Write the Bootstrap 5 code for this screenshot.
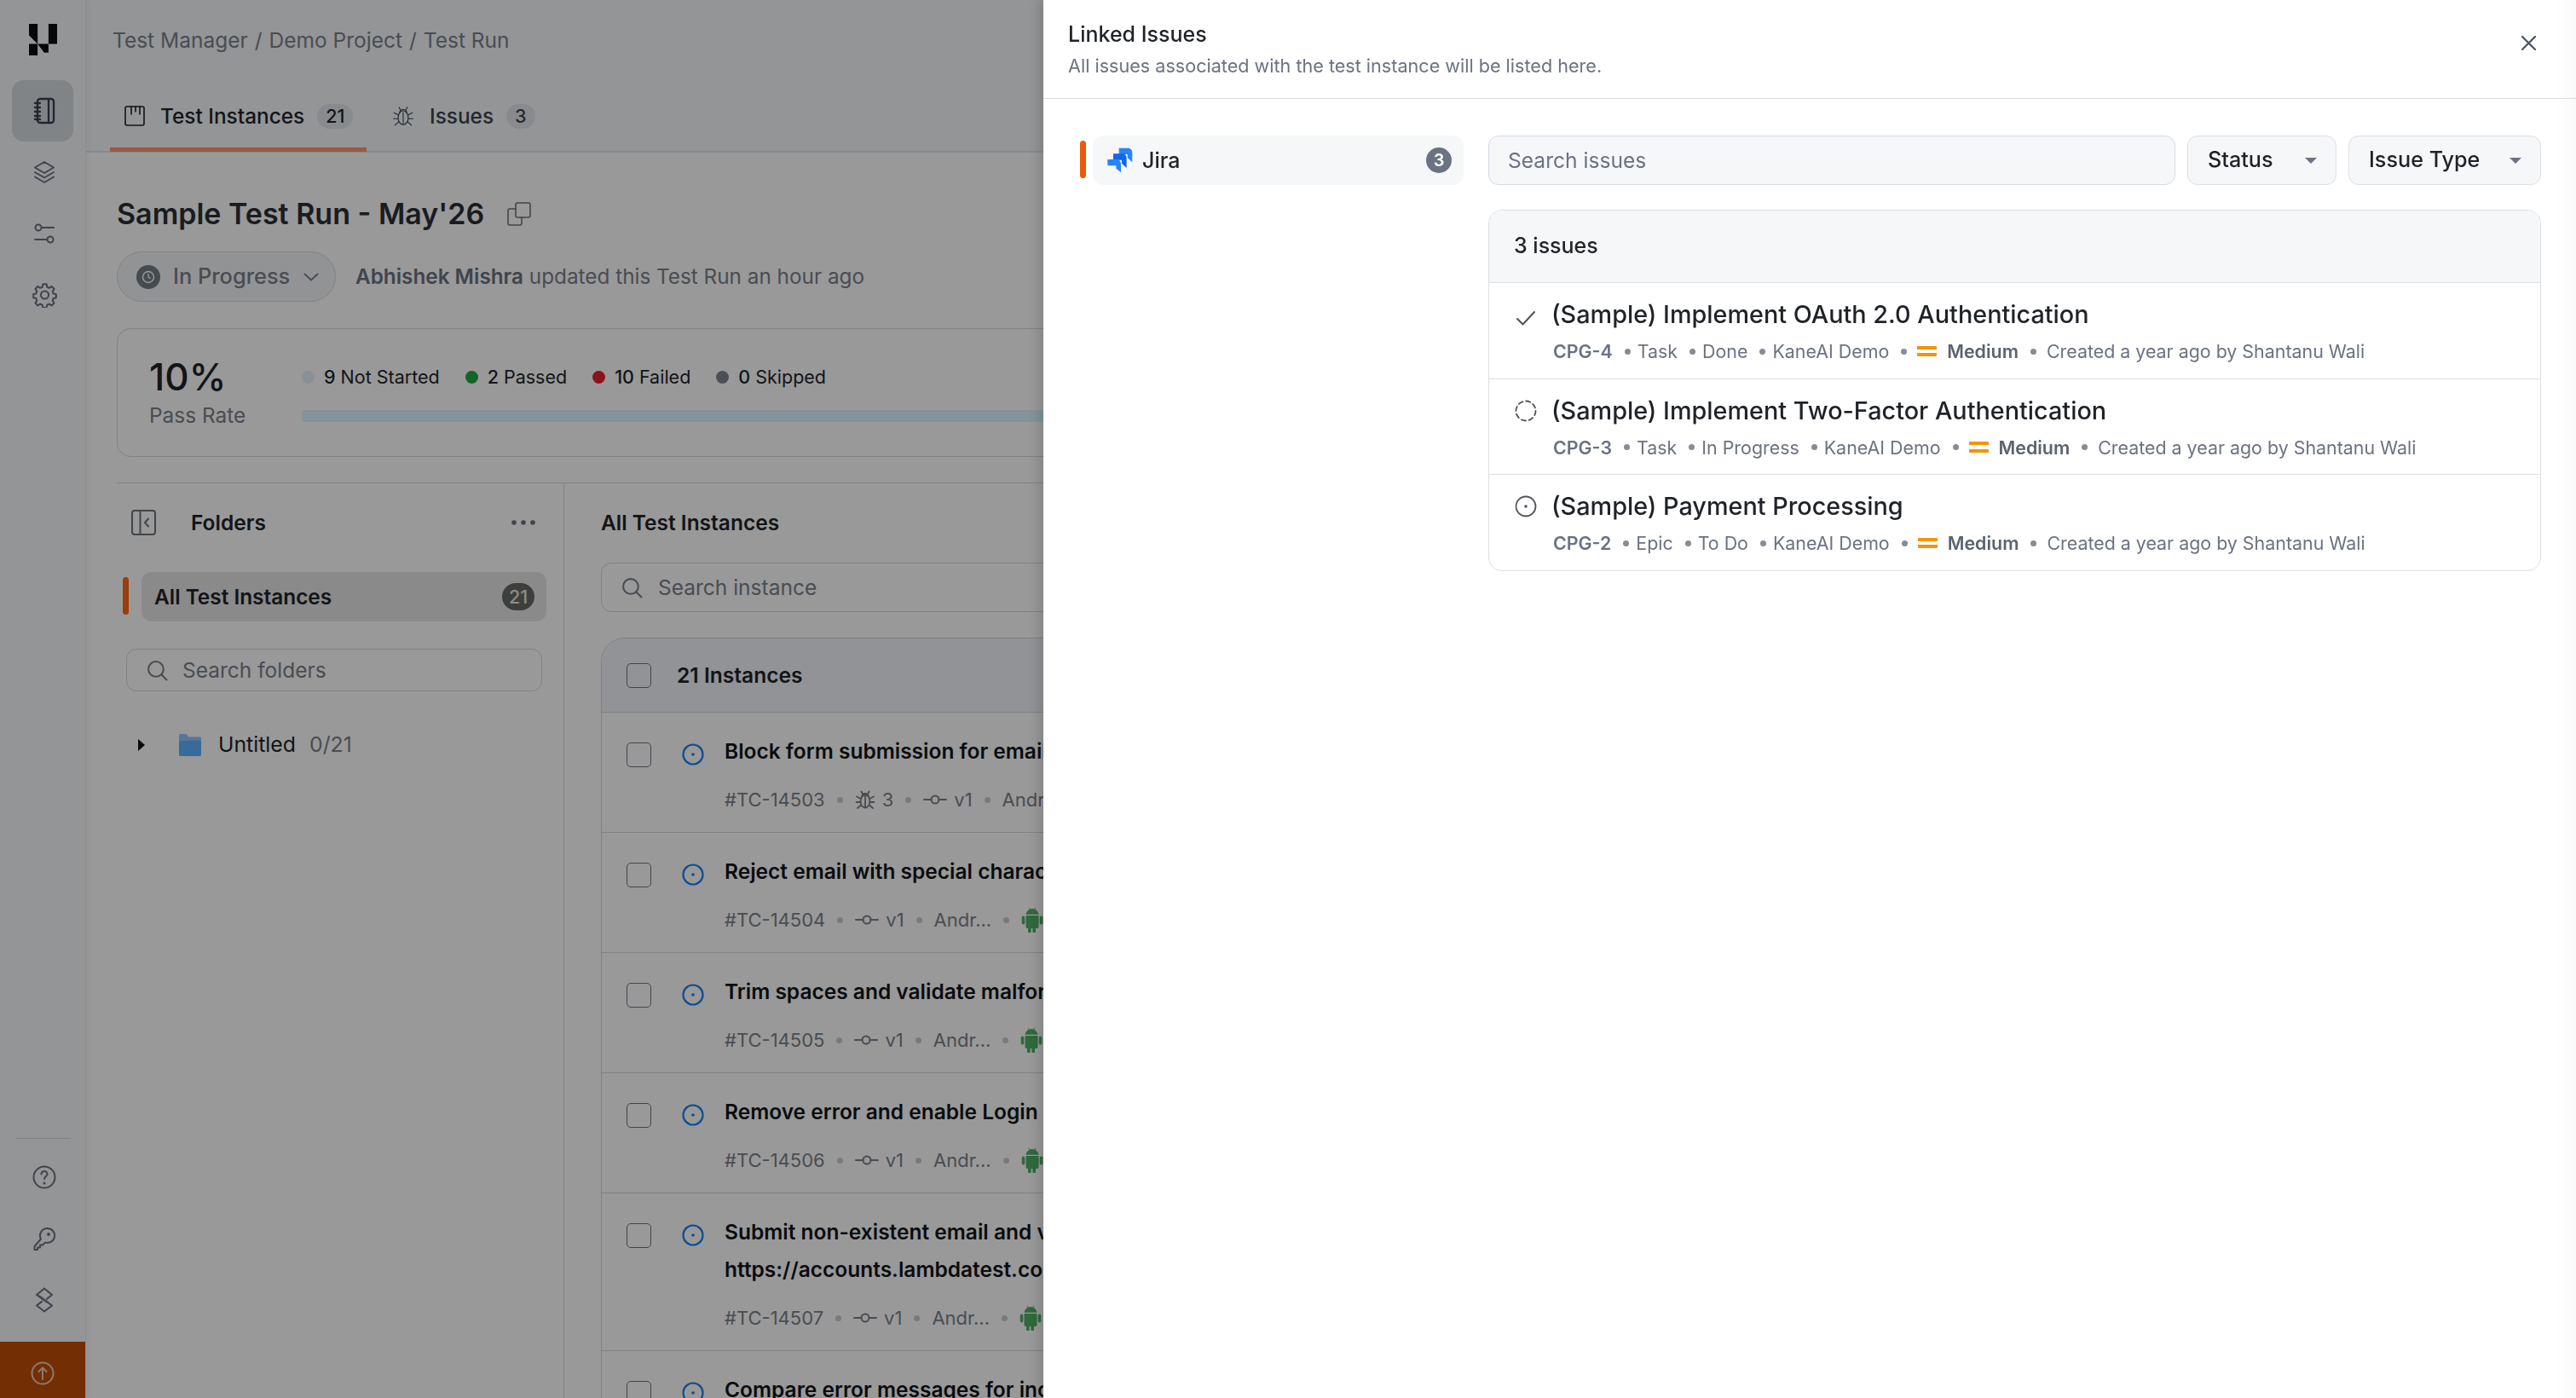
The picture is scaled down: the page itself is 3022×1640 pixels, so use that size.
<!DOCTYPE html>
<html lang="en">
<head>
    <meta charset="UTF-8">
    <meta name="viewport" content="width=device-width, initial-scale=1.0">
    <title>Linked Issues</title>
    <link href="https://cdn.jsdelivr.net/npm/bootstrap@5.3.0/dist/css/bootstrap.min.css" rel="stylesheet">
    <style>
        body { font-family: Inter, "Liberation Sans", sans-serif; color: #1f2328; overflow: hidden; height: 100vh; font-size: 24.5px; }
        .ico { fill: none; stroke: currentColor; stroke-linecap: round; stroke-linejoin: round; flex-shrink: 0; }

        .side-rail { width: 101px; background: #f6f8fa; border-right: 1px solid #eceef0; box-shadow: 3px 0 6px rgba(0,0,0,.03); color: #6b7280; z-index: 1; }
        .rail-logo { height: 94px; }
        .rail-item { width: 72px; height: 72px; border-radius: 14px; }
        .rail-item svg { margin-left: 4px; }
        .rail-item.is-active { background: #d8dce1; color: #374151; }
        .rail-sep { width: 65px; height: 1px; background: #d5d7da; margin-bottom: 9px; }
        .rail-up { height: 66px; background: #c14d05; color: #e8ccb8; margin-top: 13px; }

        .top-head { height: 179px; background: #f6f8fb; border-bottom: 2px solid #e5e7eb; padding-left: 28px; }
        .crumbs { padding: 29px 0 0 3px; height: 110px; color: #7a808a; font-size: 24.5px; line-height: 36px; }
        .tab-on { width: 301px; height: 70px; padding: 0 0 9px 17px; border-bottom: 5px solid #ff9470; margin-bottom: -2px; color: #1f2328; }
        .tab-off { height: 70px; padding: 0 0 14px 30px; color: #374151; }
        .tab-label { font-size: 24.4px; font-weight: 500; margin: 0 15px 0 18px; }
        .tab-count { height: 29px; border-radius: 15px; background: #e5e7eb; font-size: 21.5px; font-weight: 500; padding: 0 10px; line-height: 29px; }

        .sum-wrap { padding: 0 0 0 36px; }
        .run-title { margin-top: 50px; height: 44px; }
        .run-title h1 { font-size: 34px; line-height: 44px; font-weight: 600; margin: 0 26px 0 0; color: #2b2f36; }
        .run-meta { margin-top: 22px; height: 59px; color: #7a808a; font-size: 24.3px; }
        .status-pill { width: 257px; height: 59px; border: 1px solid #d5d9de; border-radius: 30px; background: #f3f5f7; padding-left: 22px; margin-right: 23px; font-size: 25.4px; font-weight: 500; }
        .status-dot { width: 28px; height: 28px; background: #747d86; color: #fff; border-radius: 50%; margin-right: 15px; }
        .run-meta b { font-weight: 600; color: #6b7280; }
        .rate-card { margin-top: 31px; height: 151px; width: 2700px; border: 1px solid #d5d7da; border-radius: 16px; padding: 29px 0 0 37px; }
        .rate-num { font-size: 44px; line-height: 54px; font-weight: 500; color: #1f2328; }
        .rate-lbl { font-size: 24.4px; line-height: 36px; color: #7a808a; }
        .rate-left { width: 175px; }
        .rate-right { padding-top: 12px; }
        .legend { font-size: 21.5px; line-height: 30px; height: 30px; }
        .legend span.pip { width: 15px; height: 15px; border-radius: 50%; margin-right: 11px; }
        .legend b { font-weight: 500; margin-right: 6px; }
        .legend-cell { margin-right: 30px; }
        .rate-bar { height: 14px; border-radius: 4px; margin-top: 24px; background: #d9f6ff; width: 2400px; }

        .split { margin-top: 30px; margin-left: 36px; border-top: 1px solid #d5d7da; }
        .folder-col { width: 525px; border-right: 1px solid #d5d7da; height: 1100px; }
        .pane-head { height: 92px; padding-left: 17px; font-size: 24.5px; font-weight: 600; }
        .pane-head .name { margin-left: 41px; }
        .all-row { margin-top: 12px; margin-left: 7px; gap: 15px; }
        .mark-bar { width: 7px; height: 44px; margin-top: 6px; border-radius: 4px; background: #ff6a14; flex-shrink: 0; }
        .panel-mark { background: #ea580c; }
        .all-pill { width: 475px; height: 58px; border-radius: 12px; background: #e6e6e6; padding: 0 14px 0 15px; font-weight: 600; font-size: 24.4px; }
        .round-count { min-width: 38px; height: 32px; border-radius: 16px; background: #676a67; color: #e8e8e8; font-size: 21.5px; font-weight: 500; text-align: center; line-height: 32px; }
        .find-box { border: 1px solid #d5d7da; border-radius: 12px; color: #7a808a; font-size: 24.5px; }
        .find-folder { margin: 32px 0 0 11px; width: 488px; height: 50px; padding-left: 23px; gap: 17px; }
        .tree-item { margin-top: 40px; height: 46px; padding-left: 25px; font-size: 24.8px; }
        .tree-gap { margin-left: 40px; }
        .tree-count { color: #7a808a; margin-left: 16px; }
        .inst-col { padding-left: 43px; }
        .inst-head { height: 92px; font-size: 24.5px; font-weight: 600; }
        .find-inst { margin-top: 1px; height: 58px; width: 2200px; padding-left: 23px; gap: 18px; }
        .inst-card { margin-top: 30px; width: 2200px; border: 1px solid #d5d7da; border-radius: 28px 0 0 0; }
        .inst-top { height: 86px; background: #f2f5fa; padding-left: 29px; font-weight: 600; font-size: 24.6px; border-radius: 28px 0 0 0; }
        .form-check-input.tick { width: 29px; height: 29px; margin: 0; border-radius: 5px; border: 1.5px solid #6b7280; flex-shrink: 0; background-color: transparent; }
        .inst-top .tick { margin-right: 30px; }
        .inst-row { border-top: 1px solid #d5d7da; padding: 23px 0 18px 29px; min-height: 141px; white-space: nowrap; }
        .inst-row .tick { margin: 12px 36px 0 0; }
        .inst-row .state { margin: 13px 24px 0 0; color: #1480f5; }
        .inst-name { font-size: 24.5px; line-height: 44px; font-weight: 600; color: #111418; }
        .inst-sub { margin-top: 15px; font-size: 22px; line-height: 40px; height: 40px; color: #7a808a; gap: 8px; }
        .inst-sub i { width: 7px; height: 7px; background: #c9ccd1; border-radius: 50%; margin: 0 6px; }
        .inst-sub .droid { color: #50af64; }

        .page-dim { position: fixed; inset: 0; background: rgba(0,0,0,.4); z-index: 1040; }
        .offcanvas.issues-panel { --bs-offcanvas-width: 1798px; border-left: 0; box-shadow: -5px 0 14px rgba(0,0,0,.16), inset -34px 0 30px -34px rgba(0,0,0,.05); transition: none; }
        .panel-top { height: 116px; border-bottom: 1.5px solid #d9dce1; padding: 0 47px 0 29px; }
        .panel-top h5 { font-size: 25px; line-height: 34px; font-weight: 500; margin: 23px 0 0; color: #1f2328; }
        .panel-top p { font-size: 21.6px; line-height: 32px; margin: 4px 0 0; color: #6b7280; }
        .panel-x { color: #4b5563; margin-top: 42px; width: 17px; height: 17px; }
        .panel-body { padding: 43px 41px 0 43px; }
        .src-col { width: 450px; margin-right: 29px; gap: 8px; }
        .src-pill { height: 58px; width: 435px; background: #f6f7f9; border-radius: 12px; padding: 0 14px 0 17px; font-size: 25px; font-weight: 500; }
        .src-name { padding-top: 2px; margin-left: 3px; }
        .src-pill .round-num { width: 30px; height: 30px; border-radius: 50%; background: #6b7280; color: #fff; font-size: 20px; font-weight: 600; line-height: 30px; text-align: center; }
        .issue-col { width: 1235px; }
        .filter-row { gap: 14px; height: 58px; }
        .filter-input { height: 58px; background: #f6f7f9; border: 1.5px solid #d5dae2; border-radius: 12px; padding: 0 22px; color: #6b7280; font-size: 24.6px; }
        .filter-btn { height: 58px; background: #f6f7f9; border: 1.5px solid #dcdfe3; border-radius: 12px; padding: 0 22px 0 23px; font-size: 25.2px; font-weight: 500; color: #1f2328; }
        .caret-mark { width: 0; height: 0; border-left: 7px solid transparent; border-right: 7px solid transparent; border-top: 7px solid #6b7280; }
        .issue-card { margin-top: 29px; border: 1.5px solid #dcdfe3; border-radius: 16px; overflow: hidden; }
        .issue-top { height: 84px; background: #f6f7f9; padding-left: 29px; font-size: 25px; font-weight: 500; }
        .issue-row { border-top: 1.5px solid #dcdfe3; height: 112.5px; padding: 17px 0 0 30px; }
        .issue-row .state { color: #52525b; margin-right: 17px; width: 26px; height: 26px; margin-top: 7px; flex-shrink: 0; }
        .issue-name { font-size: 28.8px; line-height: 40px; font-weight: 500; color: #1f2328; }
        .issue-sub { margin: 8px 0 0 2px; font-size: 21.4px; line-height: 30px; color: #6b7280; }
        .issue-sub b { font-weight: 600; }
        .issue-sub i { width: 7px; height: 7px; background: #858c96; border-radius: 50%; margin: 0 8px 0 14px; }
        .prio { color: #5b6370; }
        .prio-mark { width: 23px; height: 12.5px; border-top: 4px solid #f59307; border-bottom: 4px solid #f59307; border-radius: 1px; }
    </style>
</head>

<body>
    <svg width="0" height="0" class="d-none">
        <symbol id="i-search" viewBox="0 0 24 24"><circle cx="10.500" cy="10.500" r="8.500"/><path d="M17 17l5.500 5.500"/></symbol>
        <symbol id="i-bug" viewBox="0 0 24 24"><ellipse cx="12" cy="14" rx="5.500" ry="7.500"/><path d="M8 8.500c.6-2.400 2-3.500 4-3.500s3.400 1.100 4 3.500M12 8v13M9 5.500L7.500 2.500M15 5.500l1.500-3M7 11L2 8.500M17 11l5-2.500M6.500 15H1.500M17.500 15h5M7 18.500L3 22M17 18.500l4 3.500"/></symbol>
        <symbol id="i-ver" viewBox="0 0 28 14"><circle cx="14" cy="7" r="4.500"/><path d="M1 7h8.500M18.500 7H27"/></symbol>
        <symbol id="i-target" viewBox="0 0 26 26"><circle cx="13" cy="13" r="11.500"/><circle cx="13" cy="13" r="1.800" fill="currentColor" stroke="none"/></symbol>
        <symbol id="i-droid" viewBox="0 0 26 30"><path fill="currentColor" stroke="none" d="M5.500 10h15v13a2 2 0 0 1-2 2h-1.500v3.500a1.800 1.800 0 0 1-3.600 0V25h-1.800v3.500a1.800 1.800 0 0 1-3.600 0V25H7.500a2 2 0 0 1-2-2zM2.500 10.500a1.800 1.800 0 0 1 1.800 1.800v6.500a1.800 1.800 0 0 1-3.600 0v-6.500a1.800 1.800 0 0 1 1.800-1.800zM23.500 10.500a1.800 1.800 0 0 1 1.800 1.800v6.500a1.800 1.800 0 0 1-3.600 0v-6.500a1.800 1.800 0 0 1 1.800-1.800zM5.500 8.800C5.800 5.500 8 3.500 9.600 2.900L8.500 1l.6-.4 1.200 2a8 8 0 0 1 5.400 0l1.200-2 .6.4-1.100 1.900c1.600.6 3.800 2.600 4.100 5.900z"/></symbol>
    </svg>

    <div class="d-flex vh-100">
        <aside class="side-rail d-flex flex-column align-items-center flex-shrink-0">
            <div class="rail-logo d-flex justify-content-center pt-4 w-100">
                <svg width="33" height="37" viewBox="32 25 98 110" class="mt-1"><path fill="#0c0c0c" d="M32 25h30v70L32 65zM32 95h30v40H32zM62 95h38v30H85zM100 25h30v70h-30z"/></svg>
            </div>
            <div class="rail-item is-active d-flex align-items-center justify-content-center">
                <svg class="ico" width="26" height="32" viewBox="0 0 26 32" stroke-width="2.300"><rect x="5" y="2" width="19" height="28" rx="3"/><path d="M18 2v28M2 7h6M2 12h6M2 17h6M2 22h6M2 26h6"/></svg>
            </div>
            <div class="rail-item d-flex align-items-center justify-content-center">
                <svg class="ico" width="26" height="28" viewBox="0 0 26 28" stroke-width="2"><path d="M13 2l11 6.500-11 6.500L2 8.500zM2 14l11 6.500L24 14M2 19.500L13 26l11-6.500"/></svg>
            </div>
            <div class="rail-item d-flex align-items-center justify-content-center">
                <svg class="ico" width="24" height="24" viewBox="0 0 24 24" stroke-width="2"><circle cx="5" cy="5" r="3.500"/><path d="M9 5h14M1 19h14"/><circle cx="19" cy="19" r="3.500"/></svg>
            </div>
            <div class="rail-item d-flex align-items-center justify-content-center">
                <svg class="ico" width="29" height="30" viewBox="0 0 24 24" stroke-width="1.700"><path d="M10.300 2.500h3.400l.6 2.800 2 .9 2.500-1.500 2.300 2.500-1.500 2.400.8 2 2.600.7v3.400l-2.600.7-.8 2 1.500 2.400-2.300 2.500-2.500-1.500-2 .9-.6 2.800h-3.400l-.6-2.800-2-.9-2.500 1.500-2.300-2.500 1.500-2.400-.8-2-2.600-.7v-3.400l2.600-.7.8-2-1.500-2.400L5.200 4.700l2.500 1.500 2-.9z" transform="translate(0 -1)"/><circle cx="12" cy="12" r="3.800"/></svg>
            </div>

            <div class="rail-sep mt-auto"></div>
            <div class="rail-item d-flex align-items-center justify-content-center">
                <svg class="ico" width="28" height="28" viewBox="0 0 28 28" stroke-width="2"><circle cx="14" cy="14" r="12.500"/><path d="M10.500 10.500c0-2 1.500-3.500 3.500-3.500s3.500 1.500 3.500 3.300c0 2.700-3.500 2.700-3.500 5.700"/><circle cx="14" cy="21" r="1.500" fill="currentColor" stroke="none"/></svg>
            </div>
            <div class="rail-item d-flex align-items-center justify-content-center">
                <svg class="ico" width="26" height="28" viewBox="0 0 26 28" stroke-width="2"><path d="M16.500 2a8.500 8.500 0 1 1-2.500 16.600L11 21.500H8v3H5V27H1.500v-4L9 14.500A8.500 8.500 0 0 1 16.500 2z"/><circle cx="18" cy="9" r=".9" fill="currentColor"/></svg>
            </div>
            <div class="rail-item d-flex align-items-center justify-content-center">
                <svg class="ico" width="22" height="30" viewBox="0 0 22 30" stroke-width="2.100"><path d="M11 1.500L20 9l-6 4.800M8 12.500L2 9l9-7.500M11 15l9 6.500-9 7-9-7 6-4.600M14 17.500L2 9M8 12.500L20 21.500"/></svg>
            </div>
            <div class="rail-up w-100 d-flex align-items-center justify-content-center">
                <svg class="ico mt-2" width="28" height="30" viewBox="0 0 28 30" stroke-width="2"><circle cx="14" cy="15" r="12.500"/><path d="M14 22V9M9.500 13L14 8.500l4.500 4.500"/></svg>
            </div>
        </aside>

        <main class="flex-grow-1 overflow-hidden">
            <header class="top-head">
                <div class="crumbs d-flex gap-2"><span>Test Manager</span><span>/</span><span>Demo Project</span><span>/</span><span>Test Run</span></div>
                <nav class="d-flex" style="margin-top:-2px">
                    <div class="tab-on d-flex align-items-center">
                        <svg class="ico" width="24" height="24" viewBox="0 0 24 24" stroke-width="1.600"><rect x="1" y="1" width="22" height="22" rx="2"/><path d="M8 1v9M13 1v6M18 1v9"/></svg>
                        <span class="tab-label">Test Instances</span><span class="tab-count">21</span>
                    </div>
                    <div class="tab-off d-flex align-items-center">
                        <svg class="ico" width="26" height="26"><use href="#i-bug"/></svg>
                        <span class="tab-label">Issues</span><span class="tab-count">3</span>
                    </div>
                </nav>
            </header>

            <section class="sum-wrap">
                <div class="run-title d-flex align-items-center">
                    <h1>Sample Test Run - May'26</h1>
                    <svg class="ico text-secondary" width="30" height="30" viewBox="0 0 30 30" stroke-width="1.600"><rect x="11" y="2" width="17" height="17" rx="2"/><path d="M11 9H4a2 2 0 0 0-2 2v15a2 2 0 0 0 2 2h12a2 2 0 0 0 2-2v-7"/></svg>
                </div>
                <div class="run-meta d-flex align-items-center">
                    <div class="status-pill d-flex align-items-center">
                        <span class="status-dot d-flex align-items-center justify-content-center">
                            <svg class="ico" width="16" height="16" viewBox="0 0 16 16" stroke-width="1.400"><circle cx="8" cy="8" r="6.500"/><path d="M8 4.500V8l2 1.500"/></svg>
                        </span>
                        <span>In Progress</span>
                        <svg class="ico ms-3" width="18" height="10" viewBox="0 0 18 10" stroke-width="2"><path d="M1.500 1.500L9 8.500l7.500-7"/></svg>
                    </div>
                    <span><b>Abhishek Mishra</b> updated this Test Run an hour ago</span>
                </div>
                <div class="rate-card d-flex align-items-start">
                    <div class="rate-left">
                        <div class="rate-num">10%</div>
                        <div class="rate-lbl">Pass Rate</div>
                    </div>
                    <div class="rate-right ms-1">
                        <div class="legend d-flex align-items-center">
                            <div class="legend-cell d-flex align-items-center"><span class="pip" style="background:#e2f2fa"></span><b>9</b>Not Started</div>
                            <div class="legend-cell d-flex align-items-center"><span class="pip" style="background:#21a742"></span><b>2</b>Passed</div>
                            <div class="legend-cell d-flex align-items-center"><span class="pip" style="background:#e9212a"></span><b>10</b>Failed</div>
                            <div class="legend-cell d-flex align-items-center"><span class="pip" style="background:#7d8592"></span><b>0</b>Skipped</div>
                        </div>
                        <div class="rate-bar"></div>
                    </div>
                </div>
            </section>

            <section class="split d-flex">
                <div class="folder-col flex-shrink-0">
                    <div class="pane-head d-flex align-items-center">
                        <svg class="ico text-secondary" width="29" height="30" viewBox="0 0 29 30" stroke-width="2"><rect x="1" y="1" width="27" height="28" rx="3"/><path d="M10.500 1v28M20 10.500L16 15l4 4.500"/></svg>
                        <span class="name flex-grow-1">Folders</span>
                        <svg width="30" height="8" viewBox="0 0 30 8" class="me-4"><circle cx="4" cy="4" r="2.800" fill="#6b7280"/><circle cx="15" cy="4" r="2.800" fill="#6b7280"/><circle cx="26" cy="4" r="2.800" fill="#6b7280"/></svg>
                        <span class="d-inline-block ms-2"></span>
                    </div>
                    <div class="all-row d-flex">
                        <div class="mark-bar"></div>
                        <div class="all-pill d-flex align-items-center justify-content-between"><span>All Test Instances</span><span class="round-count">21</span></div>
                    </div>
                    <div class="find-folder find-box d-flex align-items-center">
                        <svg class="ico" width="25" height="25" stroke-width="2"><use href="#i-search"/></svg>
                        <span>Search folders</span>
                    </div>
                    <div class="tree-item d-flex align-items-center">
                        <svg width="8" height="14" viewBox="0 0 8 14"><path d="M0 0l8 7-8 7z" fill="#111"/></svg>
                        <svg class="tree-gap" width="26" height="26" viewBox="0 0 26 26"><path fill="#8cc6ff" d="M0 2a2 2 0 0 1 2-2h6.500l3 3.500H24a2 2 0 0 1 2 2V24a2 2 0 0 1-2 2H2a2 2 0 0 1-2-2z"/><path fill="#5cb2ff" d="M0 8h26v16a2 2 0 0 1-2 2H2a2 2 0 0 1-2-2z"/></svg>
                        <span class="ms-3 ps-1">Untitled</span><span class="tree-count">0/21</span>
                    </div>
                </div>

                <div class="inst-col flex-shrink-0">
                    <div class="inst-head d-flex align-items-center">All Test Instances</div>
                    <div class="find-inst find-box d-flex align-items-center">
                        <svg class="ico" width="25" height="25" stroke-width="2"><use href="#i-search"/></svg>
                        <span>Search instance</span>
                    </div>
                    <div class="inst-card">
                        <div class="inst-top d-flex align-items-center"><input class="form-check-input tick" type="checkbox" aria-label="Select all"><span>21 Instances</span></div>

                        <div class="inst-row d-flex">
                            <input class="form-check-input tick" type="checkbox" aria-label="Select">
                            <svg class="ico state" width="26" height="26" stroke-width="2.200"><use href="#i-target"/></svg>
                            <div>
                                <div class="inst-name">Block form submission for email with missing domain</div>
                                <div class="inst-sub d-flex align-items-center"><span>#TC-14503</span><i></i><svg class="ico" width="24" height="24" stroke-width="1.800"><use href="#i-bug"/></svg><span>3</span><i></i><svg class="ico" width="28" height="14" stroke-width="2"><use href="#i-ver"/></svg><span>v1</span><i></i><span>Andr...</span></div>
                            </div>
                        </div>
                        <div class="inst-row d-flex">
                            <input class="form-check-input tick" type="checkbox" aria-label="Select">
                            <svg class="ico state" width="26" height="26" stroke-width="2.200"><use href="#i-target"/></svg>
                            <div>
                                <div class="inst-name">Reject email with special characters in the domain</div>
                                <div class="inst-sub d-flex align-items-center"><span>#TC-14504</span><i></i><svg class="ico" width="28" height="14" stroke-width="2"><use href="#i-ver"/></svg><span>v1</span><i></i><span>Andr...</span><i></i><svg class="droid" width="26" height="30"><use href="#i-droid"/></svg></div>
                            </div>
                        </div>
                        <div class="inst-row d-flex">
                            <input class="form-check-input tick" type="checkbox" aria-label="Select">
                            <svg class="ico state" width="26" height="26" stroke-width="2.200"><use href="#i-target"/></svg>
                            <div>
                                <div class="inst-name">Trim spaces and validate malformed email address</div>
                                <div class="inst-sub d-flex align-items-center"><span>#TC-14505</span><i></i><svg class="ico" width="28" height="14" stroke-width="2"><use href="#i-ver"/></svg><span>v1</span><i></i><span>Andr...</span><i></i><svg class="droid" width="26" height="30"><use href="#i-droid"/></svg></div>
                            </div>
                        </div>
                        <div class="inst-row d-flex">
                            <input class="form-check-input tick" type="checkbox" aria-label="Select">
                            <svg class="ico state" width="26" height="26" stroke-width="2.200"><use href="#i-target"/></svg>
                            <div>
                                <div class="inst-name">Remove error and enable Login button on valid email</div>
                                <div class="inst-sub d-flex align-items-center"><span>#TC-14506</span><i></i><svg class="ico" width="28" height="14" stroke-width="2"><use href="#i-ver"/></svg><span>v1</span><i></i><span>Andr...</span><i></i><svg class="droid" width="26" height="30"><use href="#i-droid"/></svg></div>
                            </div>
                        </div>
                        <div class="inst-row d-flex">
                            <input class="form-check-input tick" type="checkbox" aria-label="Select">
                            <svg class="ico state" width="26" height="26" stroke-width="2.200"><use href="#i-target"/></svg>
                            <div>
                                <div class="inst-name">Submit non-existent email and verify the error on<br>https://accounts.lambdatest.com/login</div>
                                <div class="inst-sub d-flex align-items-center"><span>#TC-14507</span><i></i><svg class="ico" width="28" height="14" stroke-width="2"><use href="#i-ver"/></svg><span>v1</span><i></i><span>Andr...</span><i></i><svg class="droid" width="26" height="30"><use href="#i-droid"/></svg></div>
                            </div>
                        </div>
                        <div class="inst-row d-flex">
                            <input class="form-check-input tick" type="checkbox" aria-label="Select">
                            <svg class="ico state" width="26" height="26" stroke-width="2.200"><use href="#i-target"/></svg>
                            <div>
                                <div class="inst-name">Compare error messages for incorrect password</div>
                            </div>
                        </div>
                    </div>
                </div>
            </section>
        </main>
    </div>

    <div class="page-dim"></div>

    <div class="offcanvas offcanvas-end show issues-panel" tabindex="-1" data-bs-backdrop="false" data-bs-scroll="true" aria-labelledby="linkedIssuesLabel">
        <div class="panel-top d-flex justify-content-between flex-shrink-0">
            <div>
                <h5 id="linkedIssuesLabel">Linked Issues</h5>
                <p>All issues associated with the test instance will be listed here.</p>
            </div>
            <svg class="ico panel-x" viewBox="0 0 17 17" stroke-width="2.300"><path d="M1 1l15 15M16 1L1 16"/></svg>
        </div>
        <div class="panel-body d-flex align-items-start">
            <div class="src-col d-flex flex-shrink-0">
                <div class="mark-bar panel-mark"></div>
                <div class="src-pill d-flex align-items-center">
                    <svg width="30" height="30" viewBox="27 20 90 90" class="me-2">
                        <path fill="#2684ff" d="M68 22h30q17 0 17 17v33L98 56V44H68z"/>
                        <path fill="#1465ea" d="M48 42h30q17 0 17 17v33L78 76V64H48z"/>
                        <path fill="#2684ff" d="M28 62h30q17 0 17 17v29L58 94V84H28z"/>
                    </svg>
                    <span class="src-name flex-grow-1">Jira</span>
                    <span class="round-num">3</span>
                </div>
            </div>
            <div class="issue-col">
                <div class="filter-row d-flex">
                    <div class="filter-input d-flex align-items-center flex-grow-1">Search issues</div>
                    <div class="filter-btn d-flex align-items-center justify-content-between" style="width:175px"><span>Status</span><span class="caret-mark"></span></div>
                    <div class="filter-btn d-flex align-items-center justify-content-between" style="width:226px"><span>Issue Type</span><span class="caret-mark"></span></div>
                </div>
                <div class="issue-card">
                    <div class="issue-top d-flex align-items-center">3 issues</div>
                    <div class="issue-row d-flex">
                        <svg class="ico state" viewBox="0 0 26 26" stroke-width="2"><path d="M3 18l6.500 6.500L23 10"/></svg>
                        <div>
                            <div class="issue-name">(Sample) Implement OAuth 2.0 Authentication</div>
                            <div class="issue-sub d-flex align-items-center">
                                <b>CPG-4</b><i></i><span>Task</span><i></i><span>Done</span><i></i><span>KaneAI Demo</span><i></i><span class="prio-mark ms-1 me-2"></span><b class="prio ms-1">Medium</b><i></i><span class="ms-1">Created a year ago by Shantanu Wali</span>
                            </div>
                        </div>
                    </div>
                    <div class="issue-row d-flex">
                        <svg class="ico state" viewBox="0 0 26 26" stroke-width="1.800" stroke-dasharray="5.200 3.800"><circle cx="13" cy="13" r="11.500"/></svg>
                        <div>
                            <div class="issue-name">(Sample) Implement Two-Factor Authentication</div>
                            <div class="issue-sub d-flex align-items-center">
                                <b>CPG-3</b><i></i><span>Task</span><i></i><span>In Progress</span><i></i><span>KaneAI Demo</span><i></i><span class="prio-mark ms-1 me-2"></span><b class="prio ms-1">Medium</b><i></i><span class="ms-1">Created a year ago by Shantanu Wali</span>
                            </div>
                        </div>
                    </div>
                    <div class="issue-row d-flex">
                        <svg class="ico state" stroke-width="1.800"><use href="#i-target"/></svg>
                        <div>
                            <div class="issue-name">(Sample) Payment Processing</div>
                            <div class="issue-sub d-flex align-items-center">
                                <b>CPG-2</b><i></i><span>Epic</span><i></i><span>To Do</span><i></i><span>KaneAI Demo</span><i></i><span class="prio-mark ms-1 me-2"></span><b class="prio ms-1">Medium</b><i></i><span class="ms-1">Created a year ago by Shantanu Wali</span>
                            </div>
                        </div>
                    </div>
                </div>
            </div>
        </div>
    </div>

    <script src="https://cdn.jsdelivr.net/npm/bootstrap@5.3.0/dist/js/bootstrap.bundle.min.js"></script>
</body>
</html>
